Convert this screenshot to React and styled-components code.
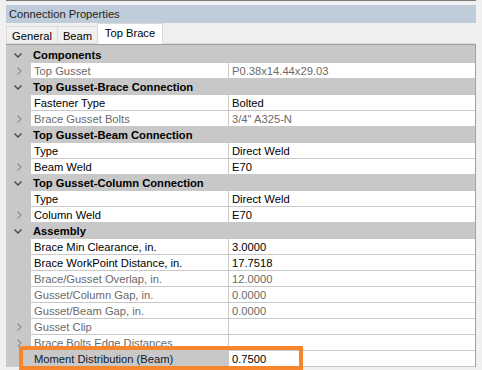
import React from "react";
import styled, { createGlobalStyle } from "styled-components";

const GlobalStyle = createGlobalStyle`
  html, body {
    margin: 0;
    padding: 0;
    background: #f0f0f0;
    font-family: "Liberation Sans", Arial, sans-serif;
    font-size: 11.2px;
    overflow: hidden;
  }
`;

const Page = styled.div`
  width: 482px;
  height: 370px;
  padding-left: 6px;
  box-sizing: border-box;
  display: flex;
  flex-direction: column;
  overflow: hidden;
`;

const TopRule = styled.div`
  width: 470px;
  height: 1px;
  background: #7a7a7a;
  margin-bottom: 4px;
`;

const TitleBar = styled.div`
  width: 470px;
  height: 18px;
  background: #bfcddb;
  color: #1e1e1e;
  display: flex;
  align-items: center;
  padding-left: 3px;
  box-sizing: border-box;
`;

const TabStrip = styled.div`
  display: flex;
  align-items: flex-end;
  height: 21px;
  width: 469px;
  position: relative;
  &::after {
    content: "";
    position: absolute;
    left: 0;
    right: 0;
    bottom: 0;
    height: 1px;
    background: #dadada;
  }
`;

const Tab = styled.div`
  width: ${(p) => p.$w}px;
  height: ${(p) => (p.$active ? "21px" : "18px")};
  padding-bottom: ${(p) => (p.$active ? "3px" : "0")};
  box-sizing: border-box;
  display: flex;
  align-items: center;
  justify-content: center;
  border: 1px solid #d9d9d9;
  border-bottom: none;
  margin-left: -1px;
  background: ${(p) => (p.$active ? "#ffffff" : "#f0f0f0")};
  color: #000;
  position: relative;
  z-index: ${(p) => (p.$active ? 1 : 0)};
  &:first-child {
    margin-left: 0;
  }
`;

const Grid = styled.div`
  width: 470px;
  border-top: 1px solid #a0a0a0;
  border-right: 1px solid #a0a0a0;
  box-sizing: border-box;
  background: #c8c8c8;
  padding-top: 2px;
  position: relative;
`;

const Row = styled.div`
  display: flex;
  height: 16px;
`;

const Margin = styled.div`
  width: 25px;
  flex: none;
  display: flex;
  align-items: center;
  justify-content: center;
  padding-right: 2px;
  box-sizing: border-box;
  background: #c8c8c8;
`;

const HeaderLabel = styled.div`
  flex: 1;
  display: flex;
  align-items: center;
  padding-left: 2px;
  font-weight: bold;
  color: #000;
`;

const NameCell = styled.div`
  width: 198px;
  flex: none;
  box-sizing: border-box;
  display: flex;
  align-items: center;
  padding-left: 3px;
  background: ${(p) => (p.$selected ? "#c8c8c8" : "#ffffff")};
  border-bottom: 1px solid #c8c8c8;
  border-right: 1px solid #c8c8c8;
  color: ${(p) => (p.$disabled ? "#6a6a6a" : p.$selected ? "#101828" : "#000")};
  white-space: nowrap;
  overflow: hidden;
`;

const ValueCell = styled.div`
  flex: 1;
  box-sizing: border-box;
  display: flex;
  align-items: center;
  padding-left: 3px;
  background: #ffffff;
  border-bottom: 1px solid #c8c8c8;
  color: ${(p) => (p.$disabled ? "#6a6a6a" : "#000")};
  white-space: nowrap;
`;

const Highlight = styled.div`
  position: absolute;
  left: 13px;
  top: 301px;
  width: 284px;
  height: 24px;
  border: 4px solid #f7852b;
  box-sizing: border-box;
  pointer-events: none;
`;

const Expanded = () => (
  <svg width="8" height="5" viewBox="0 0 8 5">
    <path d="M0.5 0.5 L4 4 L7.5 0.5" fill="none" stroke="#444" strokeWidth="1.3" />
  </svg>
);

const Collapsed = () => (
  <svg width="5" height="8" viewBox="0 0 5 8" style={{ marginLeft: 3 }}>
    <path d="M0.5 0.5 L4 4 L0.5 7.5" fill="none" stroke="#959595" strokeWidth="1.4" />
  </svg>
);

const rows = [
  { header: "Components" },
  { name: "Top Gusset", value: "P0.38x14.44x29.03", disabled: true, expand: true },
  { header: "Top Gusset-Brace Connection" },
  { name: "Fastener Type", value: "Bolted" },
  { name: "Brace Gusset Bolts", value: '3/4" A325-N', disabled: true, expand: true },
  { header: "Top Gusset-Beam Connection" },
  { name: "Type", value: "Direct Weld" },
  { name: "Beam Weld", value: "E70", expand: true },
  { header: "Top Gusset-Column Connection" },
  { name: "Type", value: "Direct Weld" },
  { name: "Column Weld", value: "E70", expand: true },
  { header: "Assembly" },
  { name: "Brace Min Clearance, in.", value: "3.0000" },
  { name: "Brace WorkPoint Distance, in.", value: "17.7518" },
  { name: "Brace/Gusset Overlap, in.", value: "12.0000", disabled: true },
  { name: "Gusset/Column Gap, in.", value: "0.0000", disabled: true },
  { name: "Gusset/Beam Gap, in.", value: "0.0000", disabled: true },
  { name: "Gusset Clip", value: "", disabled: true, expand: true },
  { name: "Brace Bolts Edge Distances", value: "", disabled: true, expand: true },
  { name: "Moment Distribution (Beam)", value: "0.7500", selected: true },
];

const App = () => {
  return (
    <>
      <GlobalStyle />
      <Page>
        <TopRule />
        <TitleBar>Connection Properties</TitleBar>
        <TabStrip>
          <Tab $w={52}>General</Tab>
          <Tab $w={41}>Beam</Tab>
          <Tab $w={66} $active>Top Brace</Tab>
        </TabStrip>
        <Grid>
          {rows.map((r, i) =>
            r.header ? (
              <Row key={i}>
                <Margin>
                  <Expanded />
                </Margin>
                <HeaderLabel>{r.header}</HeaderLabel>
              </Row>
            ) : (
              <Row key={i}>
                <Margin>{r.expand && <Collapsed />}</Margin>
                <NameCell $disabled={r.disabled} $selected={r.selected}>
                  {r.name}
                </NameCell>
                <ValueCell $disabled={r.disabled}>{r.value}</ValueCell>
              </Row>
            )
          )}
          <Highlight />
        </Grid>
      </Page>
    </>
  );
};

export default App;
